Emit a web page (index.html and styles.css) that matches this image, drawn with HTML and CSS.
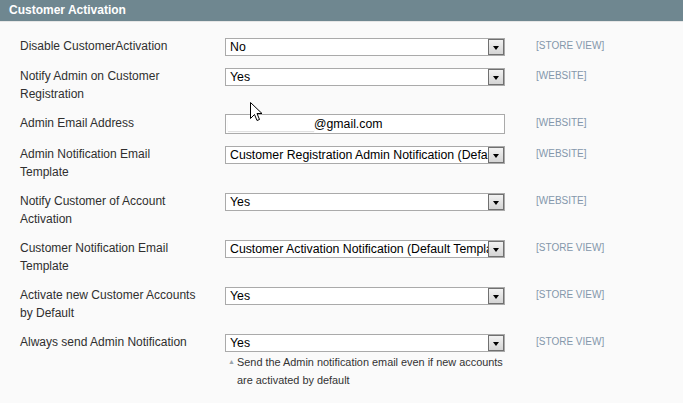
FILE: index.html
```html
<!DOCTYPE html>
<html>
<head>
<meta charset="utf-8">
<link rel="stylesheet" href="styles.css">
</head>
<body>
<div class="page">
  <div class="header">Customer Activation</div>
  <div class="form">
    <div class="row">
      <div class="label">Disable CustomerActivation</div>
      <div class="value"><div class="select"><span class="sel-text">No</span><span class="arrow"></span></div></div>
      <div class="scope">[STORE VIEW]</div>
    </div>
    <div class="row">
      <div class="label">Notify Admin on Customer<br>Registration</div>
      <div class="value"><div class="select"><span class="sel-text">Yes</span><span class="arrow"></span></div></div>
      <div class="scope">[WEBSITE]</div>
    </div>
    <div class="row">
      <div class="label">Admin Email Address</div>
      <div class="value"><div class="input"><span class="redact"></span><span class="email">@gmail.com</span></div></div>
      <div class="scope">[WEBSITE]</div>
    </div>
    <div class="row">
      <div class="label">Admin Notification Email<br>Template</div>
      <div class="value"><div class="select"><span class="sel-text">Customer Registration Admin Notification (Default Template from Locale)</span><span class="arrow"></span></div></div>
      <div class="scope">[WEBSITE]</div>
    </div>
    <div class="row">
      <div class="label">Notify Customer of Account<br>Activation</div>
      <div class="value"><div class="select"><span class="sel-text">Yes</span><span class="arrow"></span></div></div>
      <div class="scope">[WEBSITE]</div>
    </div>
    <div class="row">
      <div class="label">Customer Notification Email<br>Template</div>
      <div class="value"><div class="select"><span class="sel-text">Customer Activation Notification (Default Template from Locale)</span><span class="arrow"></span></div></div>
      <div class="scope">[STORE VIEW]</div>
    </div>
    <div class="row">
      <div class="label">Activate new Customer Accounts<br>by Default</div>
      <div class="value"><div class="select"><span class="sel-text">Yes</span><span class="arrow"></span></div></div>
      <div class="scope">[STORE VIEW]</div>
    </div>
    <div class="row">
      <div class="label">Always send Admin Notification</div>
      <div class="value">
        <div class="select"><span class="sel-text">Yes</span><span class="arrow"></span></div>
        <div class="note"><span class="note-mark">▲</span>Send the Admin notification email even if new accounts<br>are activated by default</div>
      </div>
      <div class="scope">[STORE VIEW]</div>
    </div>
  </div>
  <svg class="cursor" width="13" height="21" viewBox="0 0 13 21"><path d="M0.5 0.5 L0.5 16.5 L4.5 12.5 L7 18.5 L9.5 17.5 L7 11.5 L12 11.5 Z" fill="#fff" stroke="#000" stroke-width="1" stroke-linejoin="miter"/></svg>
</div>
</body>
</html>
```
FILE: styles.css
```css
html, body {
  margin: 0;
  padding: 0;
  background: #fafafa;
}
.page {
  position: relative;
  width: 683px;
  height: 403px;
  overflow: hidden;
  font-family: "Liberation Sans", Arial, sans-serif;
  font-size: 12px;
  color: #2f2f2f;
}
.header {
  height: 21px;
  line-height: 20px;
  background: #6f8790;
  color: #fff;
  font-weight: bold;
  font-size: 12px;
  padding-left: 9px;
  border-bottom: 1px solid #e6e6e6;
}
.form {
  padding-top: 10px;
  padding-left: 20px;
}
.row {
  display: grid;
  grid-template-columns: 205px 280px auto;
  padding: 5px 0 6px;
}
.label {
  line-height: 18px;
}
.value {
  display: flex;
  flex-direction: column;
  min-width: 0;
}
.select {
  margin-top: 1px;
  height: 18px;
  box-sizing: border-box;
  border: 1px solid #aaa;
  background: #fff;
  display: flex;
  align-items: center;
  overflow: hidden;
}
.sel-text {
  flex: 1;
  min-width: 0;
  padding-left: 4px;
  white-space: nowrap;
  overflow: hidden;
  color: #000;
  font-size: 12.3px;
  line-height: 16px;
}
.arrow {
  position: relative;
  width: 16px;
  height: 16px;
  box-sizing: border-box;
  border: 1px solid #707070;
  background: linear-gradient(#f2f2f2, #d4d4d4);
  flex: none;
}
.arrow::after {
  content: "";
  position: absolute;
  left: 4px;
  top: 6px;
  border-left: 3.5px solid transparent;
  border-right: 3.5px solid transparent;
  border-top: 4px solid #000;
}
.input {
  height: 20px;
  box-sizing: border-box;
  border: 1px solid #aaa;
  background: #fff;
  display: flex;
  align-items: center;
}
.redact {
  width: 86px;
  height: 12px;
  margin-left: 2px;
  margin-top: 2px;
  background: #fff;
  box-shadow: 0 1px 1px rgba(0, 0, 0, 0.12);
}
.email {
  font-size: 12.3px;
  color: #000;
}
.note {
  padding-left: 12px;
  padding-top: 1px;
  position: relative;
  font-size: 10.9px;
  line-height: 18px;
  color: #333;
  white-space: nowrap;
}
.note-mark {
  position: absolute;
  left: 3px;
  top: 1px;
  font-size: 7px;
  color: #9aa4ab;
}
.scope {
  margin-left: 31px;
  font-size: 10px;
  line-height: 18px;
  color: #8497ab;
}
.cursor {
  position: absolute;
  left: 250px;
  top: 102px;
}
```
